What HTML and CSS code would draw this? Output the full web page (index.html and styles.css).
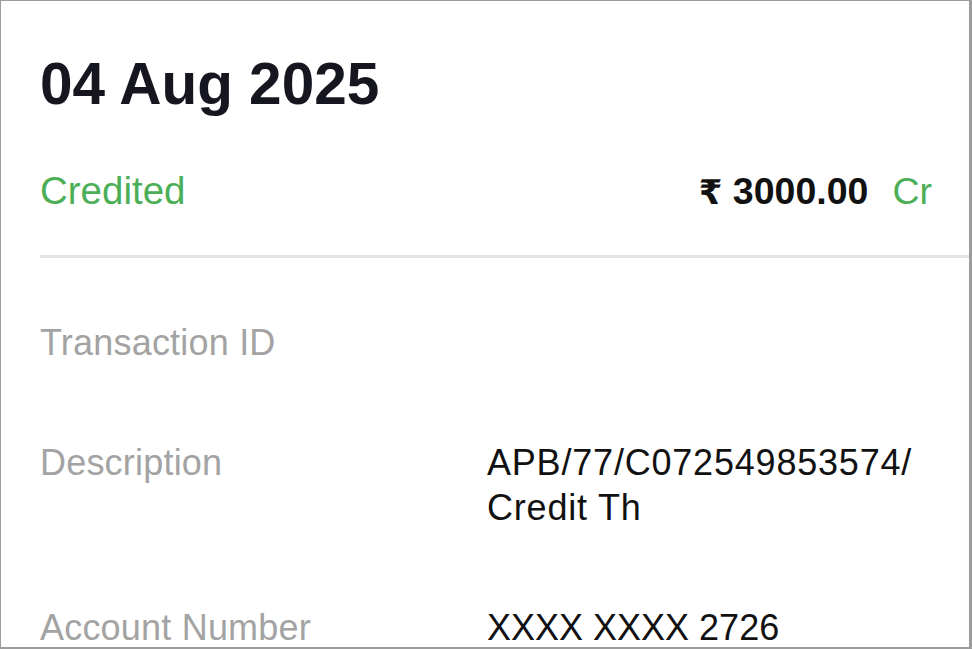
FILE: index.html
```html
<!DOCTYPE html>
<html lang="en">
<head>
<meta charset="utf-8">
<title>Transaction</title>
<link rel="stylesheet" href="styles.css">
</head>
<body>
<div class="frame">
  <div class="content">
    <h1 class="date">04 Aug 2025</h1>
    <div class="summary">
      <span class="status">Credited</span>
      <span class="amount"><span class="rupee">₹</span> 3000.00<span class="cr">Cr</span></span>
    </div>
  </div>
  <div class="divider"></div>
  <div class="details">
    <div class="row">
      <div class="label">Transaction ID</div>
      <div class="value"></div>
    </div>
    <div class="row">
      <div class="label">Description</div>
      <div class="value value-wide">APB/77/C072549853574/<wbr>Credit Th</div>
    </div>
    <div class="row">
      <div class="label">Account Number</div>
      <div class="value">XXXX XXXX 2726</div>
    </div>
  </div>
</div>
</body>
</html>
```

FILE: styles.css
```css
html, body {
  margin: 0;
  padding: 0;
  background: #ffffff;
}

.frame {
  box-sizing: border-box;
  width: 972px;
  height: 649px;
  overflow: hidden;
  border: 1px solid #9c9c9c;
  border-right-width: 3px;
  border-bottom-width: 2px;
  background: #ffffff;
  font-family: "Liberation Sans", Arial, sans-serif;
  padding-left: 39px;
}

.content {
  padding-top: 48px;
  padding-right: 37px;
}

.date {
  margin: 0;
  font-size: 58.5px;
  line-height: 70px;
  font-weight: 700;
  color: #15161f;
}

.summary {
  margin-top: 49px;
  display: flex;
  justify-content: space-between;
  align-items: baseline;
  line-height: 45px;
}

.status {
  font-size: 38.5px;
  color: #4caf57;
}

.amount {
  font-size: 37.5px;
  font-weight: 700;
  color: #111111;
}

.rupee {
  font-family: "DejaVu Sans", "Noto Sans", sans-serif;
  font-weight: 700;
  font-size: 34px;
}

.cr {
  font-weight: 400;
  color: #4caf57;
  margin-left: 24px;
}

.divider {
  margin-top: 40px;
  height: 3px;
  background: #e2e2e2;
}

.details {
  padding-top: 62px;
  display: flex;
  flex-direction: column;
  gap: 75px;
}

.row {
  display: grid;
  grid-template-columns: 447px 1fr;
  min-height: 45px;
  font-size: 36px;
  line-height: 45px;
}

.label {
  color: #a3a3a3;
  letter-spacing: 0.2px;
}

.value {
  color: #111111;
  padding-right: 20px;
}

.value-wide {
  letter-spacing: 0.8px;
}
```
